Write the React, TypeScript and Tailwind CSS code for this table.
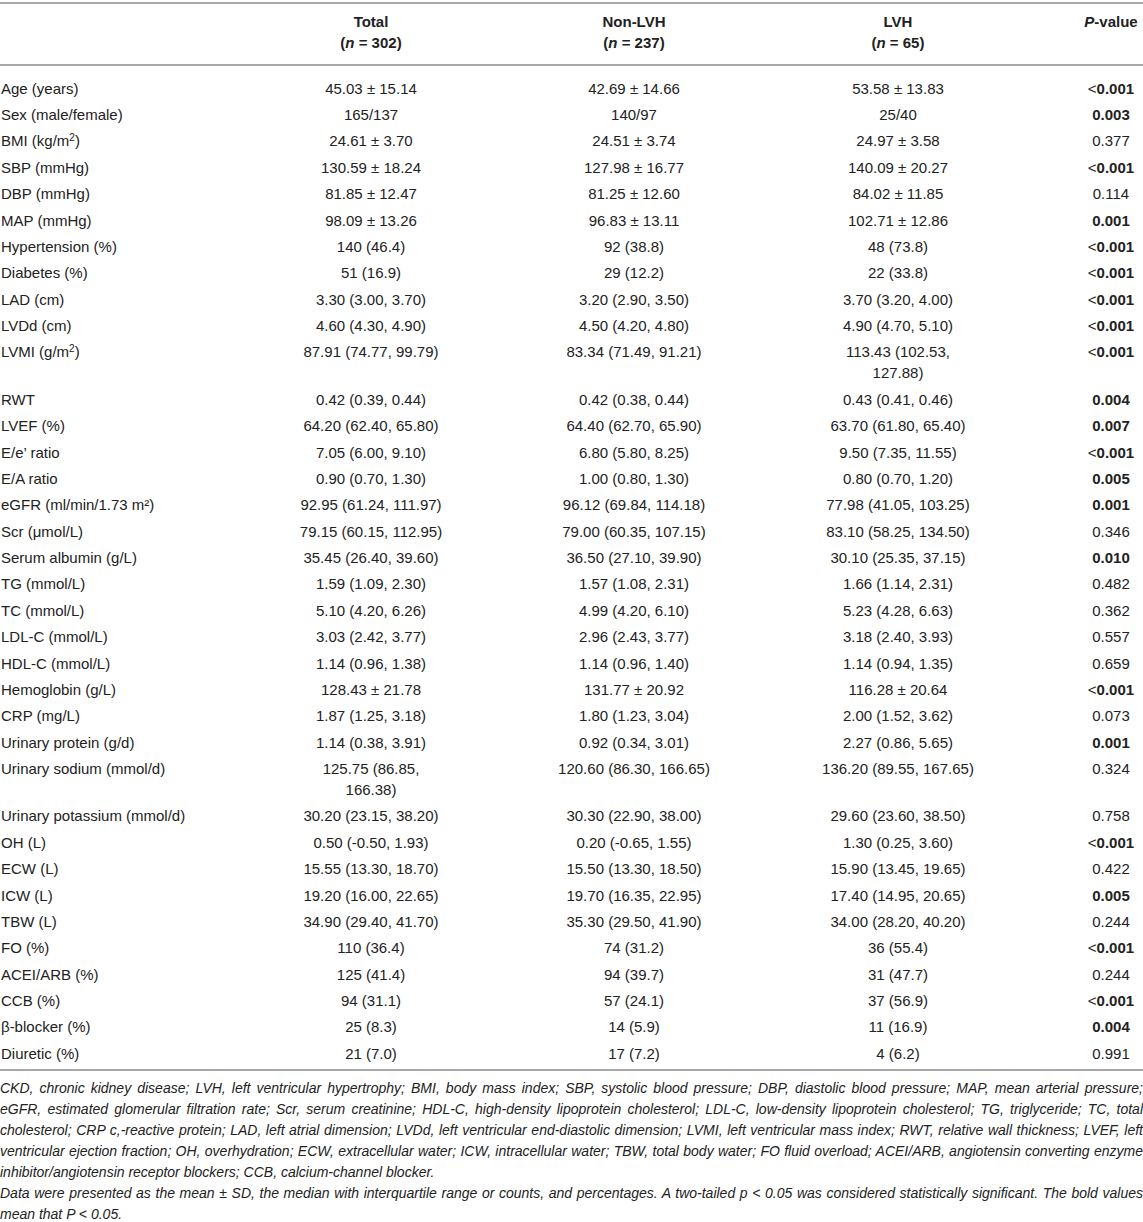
import React from 'react';

type Row = {
  label: React.ReactNode;
  total: string;
  non: string;
  lvh: string;
  p: string;
  bold?: boolean;
};

const rows: Row[] = [
  { label: 'Age (years)', total: '45.03 ± 15.14', non: '42.69 ± 14.66', lvh: '53.58 ± 13.83', p: '<0.001', bold: true },
  { label: 'Sex (male/female)', total: '165/137', non: '140/97', lvh: '25/40', p: '0.003', bold: true },
  { label: <>BMI (kg/m<sup className="text-[10px] leading-none">2</sup>)</>, total: '24.61 ± 3.70', non: '24.51 ± 3.74', lvh: '24.97 ± 3.58', p: '0.377' },
  { label: 'SBP (mmHg)', total: '130.59 ± 18.24', non: '127.98 ± 16.77', lvh: '140.09 ± 20.27', p: '<0.001', bold: true },
  { label: 'DBP (mmHg)', total: '81.85 ± 12.47', non: '81.25 ± 12.60', lvh: '84.02 ± 11.85', p: '0.114' },
  { label: 'MAP (mmHg)', total: '98.09 ± 13.26', non: '96.83 ± 13.11', lvh: '102.71 ± 12.86', p: '0.001', bold: true },
  { label: 'Hypertension (%)', total: '140 (46.4)', non: '92 (38.8)', lvh: '48 (73.8)', p: '<0.001', bold: true },
  { label: 'Diabetes (%)', total: '51 (16.9)', non: '29 (12.2)', lvh: '22 (33.8)', p: '<0.001', bold: true },
  { label: 'LAD (cm)', total: '3.30 (3.00, 3.70)', non: '3.20 (2.90, 3.50)', lvh: '3.70 (3.20, 4.00)', p: '<0.001', bold: true },
  { label: 'LVDd (cm)', total: '4.60 (4.30, 4.90)', non: '4.50 (4.20, 4.80)', lvh: '4.90 (4.70, 5.10)', p: '<0.001', bold: true },
  { label: <>LVMI (g/m<sup className="text-[10px] leading-none">2</sup>)</>, total: '87.91 (74.77, 99.79)', non: '83.34 (71.49, 91.21)', lvh: '113.43 (102.53, 127.88)', p: '<0.001', bold: true },
  { label: 'RWT', total: '0.42 (0.39, 0.44)', non: '0.42 (0.38, 0.44)', lvh: '0.43 (0.41, 0.46)', p: '0.004', bold: true },
  { label: 'LVEF (%)', total: '64.20 (62.40, 65.80)', non: '64.40 (62.70, 65.90)', lvh: '63.70 (61.80, 65.40)', p: '0.007', bold: true },
  { label: 'E/e’ ratio', total: '7.05 (6.00, 9.10)', non: '6.80 (5.80, 8.25)', lvh: '9.50 (7.35, 11.55)', p: '<0.001', bold: true },
  { label: 'E/A ratio', total: '0.90 (0.70, 1.30)', non: '1.00 (0.80, 1.30)', lvh: '0.80 (0.70, 1.20)', p: '0.005', bold: true },
  { label: 'eGFR (ml/min/1.73 m²)', total: '92.95 (61.24, 111.97)', non: '96.12 (69.84, 114.18)', lvh: '77.98 (41.05, 103.25)', p: '0.001', bold: true },
  { label: 'Scr (μmol/L)', total: '79.15 (60.15, 112.95)', non: '79.00 (60.35, 107.15)', lvh: '83.10 (58.25, 134.50)', p: '0.346' },
  { label: 'Serum albumin (g/L)', total: '35.45 (26.40, 39.60)', non: '36.50 (27.10, 39.90)', lvh: '30.10 (25.35, 37.15)', p: '0.010', bold: true },
  { label: 'TG (mmol/L)', total: '1.59 (1.09, 2.30)', non: '1.57 (1.08, 2.31)', lvh: '1.66 (1.14, 2.31)', p: '0.482' },
  { label: 'TC (mmol/L)', total: '5.10 (4.20, 6.26)', non: '4.99 (4.20, 6.10)', lvh: '5.23 (4.28, 6.63)', p: '0.362' },
  { label: 'LDL-C (mmol/L)', total: '3.03 (2.42, 3.77)', non: '2.96 (2.43, 3.77)', lvh: '3.18 (2.40, 3.93)', p: '0.557' },
  { label: 'HDL-C (mmol/L)', total: '1.14 (0.96, 1.38)', non: '1.14 (0.96, 1.40)', lvh: '1.14 (0.94, 1.35)', p: '0.659' },
  { label: 'Hemoglobin (g/L)', total: '128.43 ± 21.78', non: '131.77 ± 20.92', lvh: '116.28 ± 20.64', p: '<0.001', bold: true },
  { label: 'CRP (mg/L)', total: '1.87 (1.25, 3.18)', non: '1.80 (1.23, 3.04)', lvh: '2.00 (1.52, 3.62)', p: '0.073' },
  { label: 'Urinary protein (g/d)', total: '1.14 (0.38, 3.91)', non: '0.92 (0.34, 3.01)', lvh: '2.27 (0.86, 5.65)', p: '0.001', bold: true },
  { label: 'Urinary sodium (mmol/d)', total: '125.75 (86.85, 166.38)', non: '120.60 (86.30, 166.65)', lvh: '136.20 (89.55, 167.65)', p: '0.324' },
  { label: 'Urinary potassium (mmol/d)', total: '30.20 (23.15, 38.20)', non: '30.30 (22.90, 38.00)', lvh: '29.60 (23.60, 38.50)', p: '0.758' },
  { label: 'OH (L)', total: '0.50 (-0.50, 1.93)', non: '0.20 (-0.65, 1.55)', lvh: '1.30 (0.25, 3.60)', p: '<0.001', bold: true },
  { label: 'ECW (L)', total: '15.55 (13.30, 18.70)', non: '15.50 (13.30, 18.50)', lvh: '15.90 (13.45, 19.65)', p: '0.422' },
  { label: 'ICW (L)', total: '19.20 (16.00, 22.65)', non: '19.70 (16.35, 22.95)', lvh: '17.40 (14.95, 20.65)', p: '0.005', bold: true },
  { label: 'TBW (L)', total: '34.90 (29.40, 41.70)', non: '35.30 (29.50, 41.90)', lvh: '34.00 (28.20, 40.20)', p: '0.244' },
  { label: 'FO (%)', total: '110 (36.4)', non: '74 (31.2)', lvh: '36 (55.4)', p: '<0.001', bold: true },
  { label: 'ACEI/ARB (%)', total: '125 (41.4)', non: '94 (39.7)', lvh: '31 (47.7)', p: '0.244' },
  { label: 'CCB (%)', total: '94 (31.1)', non: '57 (24.1)', lvh: '37 (56.9)', p: '<0.001', bold: true },
  { label: 'β-blocker (%)', total: '25 (8.3)', non: '14 (5.9)', lvh: '11 (16.9)', p: '0.004', bold: true },
  { label: 'Diuretic (%)', total: '21 (7.0)', non: '17 (7.2)', lvh: '4 (6.2)', p: '0.991' },
];

// footnote lines, broken where the reference breaks them
const notes: string[] = [
  'CKD, chronic kidney disease; LVH, left ventricular hypertrophy; BMI, body mass index; SBP, systolic blood pressure; DBP, diastolic blood pressure; MAP, mean arterial pressure;',
  'eGFR, estimated glomerular filtration rate; Scr, serum creatinine; HDL-C, high-density lipoprotein cholesterol; LDL-C, low-density lipoprotein cholesterol; TG, triglyceride; TC, total',
  'cholesterol; CRP c,-reactive protein; LAD, left atrial dimension; LVDd, left ventricular end-diastolic dimension; LVMI, left ventricular mass index; RWT, relative wall thickness; LVEF, left',
  'ventricular ejection fraction; OH, overhydration; ECW, extracellular water; ICW, intracellular water; TBW, total body water; FO fluid overload; ACEI/ARB, angiotensin converting enzyme',
];

const grid = 'grid grid-cols-[240px_262px_264px_264px_113px]';

function PValue({ p, bold }: { p: string; bold?: boolean }) {
  if (!bold) return <span>{p}</span>;
  if (p.startsWith('<')) {
    return (
      <span className="font-bold">
        <span className="font-normal">&lt;</span>
        {p.slice(1)}
      </span>
    );
  }
  return <span className="font-bold">{p}</span>;
}

export default function App() {
  return (
    <div className="w-[1143px] bg-white text-[#222] text-[15px] leading-[21px] font-['Liberation_Sans',Arial,sans-serif]">
      <div className="mt-[2px] border-t-2 border-[#a8a8a8]">
        {/* header */}
        <div className={`${grid} pt-[7px] pb-[11px] border-b-2 border-[#a8a8a8] font-bold`}>
          <div />
          <div className="text-center">
            Total
            <br />(<i>n</i> = 302)
          </div>
          <div className="text-center">
            Non-LVH
            <br />(<i>n</i> = 237)
          </div>
          <div className="text-center">
            LVH
            <br />(<i>n</i> = 65)
          </div>
          <div className="pl-[49px] text-center">
            <i>P</i>-value
          </div>
        </div>

        {/* body */}
        <div className="pt-[9px] pb-[2px] border-b-2 border-[#a8a8a8]">
          {rows.map((r, i) => (
            <div key={i} className={`${grid} py-[2.7px]`}>
              <div className="pl-[1px]">{r.label}</div>
              <div className="text-center">
                <div className="mx-auto max-w-[148px]">{r.total}</div>
              </div>
              <div className="text-center">{r.non}</div>
              <div className="text-center">
                <div className="mx-auto max-w-[156px]">{r.lvh}</div>
              </div>
              <div className="pl-[49px] text-center">
                <PValue p={r.p} bold={r.bold} />
              </div>
            </div>
          ))}
        </div>
      </div>

      {/* footnotes */}
      <div className="mt-[7px] italic text-[14px] leading-[21px]">
        {notes.map((n, i) => (
          <div key={i} className="whitespace-nowrap text-justify [text-align-last:justify]">
            {n}
          </div>
        ))}
        <div>inhibitor/angiotensin receptor blockers; CCB, calcium-channel blocker.</div>
        <div className="whitespace-nowrap text-justify [text-align-last:justify]">
          Data were presented as the mean ± SD, the median with interquartile range or counts, and percentages. A two-tailed p &lt; 0.05 was considered statistically significant. The bold values
        </div>
        <div>mean that P &lt; 0.05.</div>
      </div>
    </div>
  );
}
